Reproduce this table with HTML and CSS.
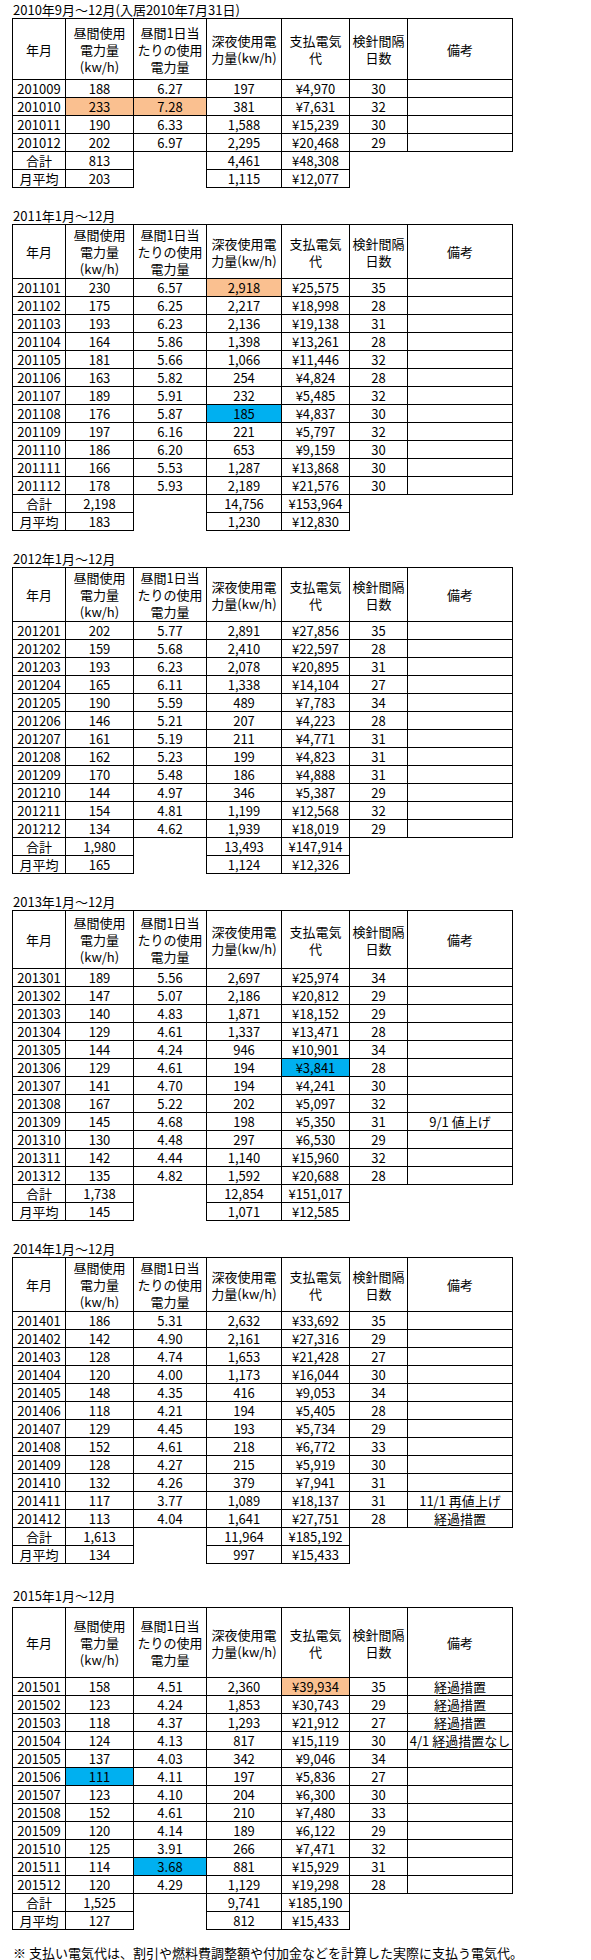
FILE: index.html
```html
<!DOCTYPE html>
<html lang="ja">
<head>
<meta charset="utf-8">
<title>電気使用量</title>
<link rel="stylesheet" href="styles.css">
</head>
<body>
<div class="sheet">

<section class="section">
<div class="title">2010年9月～12月(入居2010年7月31日)</div>
<table class="grid">
<colgroup><col class="c1"><col class="c2"><col class="c3"><col class="c4"><col class="c5"><col class="c6"><col class="c7"></colgroup>
<tr class="head h61"><td>年月</td><td>昼間使用<br>電力量<br>(kw/h)</td><td>昼間1日当<br>たりの使用<br>電力量</td><td>深夜使用電<br>力量(kw/h)</td><td>支払電気<br>代</td><td>検針間隔<br>日数</td><td>備考</td></tr>
<tr><td>201009</td><td>188</td><td>6.27</td><td>197</td><td>¥4,970</td><td>30</td><td></td></tr>
<tr><td>201010</td><td class="hl-orange">233</td><td class="hl-orange">7.28</td><td>381</td><td>¥7,631</td><td>32</td><td></td></tr>
<tr><td>201011</td><td>190</td><td>6.33</td><td>1,588</td><td>¥15,239</td><td>30</td><td></td></tr>
<tr><td>201012</td><td>202</td><td>6.97</td><td>2,295</td><td>¥20,468</td><td>29</td><td></td></tr>
<tr><td>合計</td><td>813</td><td class="blank"></td><td>4,461</td><td>¥48,308</td><td class="blank"></td><td class="blank"></td></tr>
<tr><td>月平均</td><td>203</td><td class="blank"></td><td>1,115</td><td>¥12,077</td><td class="blank"></td><td class="blank"></td></tr>
</table>
</section>

<section class="section">
<div class="title">2011年1月～12月</div>
<table class="grid">
<colgroup><col class="c1"><col class="c2"><col class="c3"><col class="c4"><col class="c5"><col class="c6"><col class="c7"></colgroup>
<tr class="head h54"><td>年月</td><td>昼間使用<br>電力量<br>(kw/h)</td><td>昼間1日当<br>たりの使用<br>電力量</td><td>深夜使用電<br>力量(kw/h)</td><td>支払電気<br>代</td><td>検針間隔<br>日数</td><td>備考</td></tr>
<tr><td>201101</td><td>230</td><td>6.57</td><td class="hl-orange">2,918</td><td>¥25,575</td><td>35</td><td></td></tr>
<tr><td>201102</td><td>175</td><td>6.25</td><td>2,217</td><td>¥18,998</td><td>28</td><td></td></tr>
<tr><td>201103</td><td>193</td><td>6.23</td><td>2,136</td><td>¥19,138</td><td>31</td><td></td></tr>
<tr><td>201104</td><td>164</td><td>5.86</td><td>1,398</td><td>¥13,261</td><td>28</td><td></td></tr>
<tr><td>201105</td><td>181</td><td>5.66</td><td>1,066</td><td>¥11,446</td><td>32</td><td></td></tr>
<tr><td>201106</td><td>163</td><td>5.82</td><td>254</td><td>¥4,824</td><td>28</td><td></td></tr>
<tr><td>201107</td><td>189</td><td>5.91</td><td>232</td><td>¥5,485</td><td>32</td><td></td></tr>
<tr><td>201108</td><td>176</td><td>5.87</td><td class="hl-blue">185</td><td>¥4,837</td><td>30</td><td></td></tr>
<tr><td>201109</td><td>197</td><td>6.16</td><td>221</td><td>¥5,797</td><td>32</td><td></td></tr>
<tr><td>201110</td><td>186</td><td>6.20</td><td>653</td><td>¥9,159</td><td>30</td><td></td></tr>
<tr><td>201111</td><td>166</td><td>5.53</td><td>1,287</td><td>¥13,868</td><td>30</td><td></td></tr>
<tr><td>201112</td><td>178</td><td>5.93</td><td>2,189</td><td>¥21,576</td><td>30</td><td></td></tr>
<tr><td>合計</td><td>2,198</td><td class="blank"></td><td>14,756</td><td>¥153,964</td><td class="blank"></td><td class="blank"></td></tr>
<tr><td>月平均</td><td>183</td><td class="blank"></td><td>1,230</td><td>¥12,830</td><td class="blank"></td><td class="blank"></td></tr>
</table>
</section>

<section class="section">
<div class="title">2012年1月～12月</div>
<table class="grid">
<colgroup><col class="c1"><col class="c2"><col class="c3"><col class="c4"><col class="c5"><col class="c6"><col class="c7"></colgroup>
<tr class="head h54"><td>年月</td><td>昼間使用<br>電力量<br>(kw/h)</td><td>昼間1日当<br>たりの使用<br>電力量</td><td>深夜使用電<br>力量(kw/h)</td><td>支払電気<br>代</td><td>検針間隔<br>日数</td><td>備考</td></tr>
<tr><td>201201</td><td>202</td><td>5.77</td><td>2,891</td><td>¥27,856</td><td>35</td><td></td></tr>
<tr><td>201202</td><td>159</td><td>5.68</td><td>2,410</td><td>¥22,597</td><td>28</td><td></td></tr>
<tr><td>201203</td><td>193</td><td>6.23</td><td>2,078</td><td>¥20,895</td><td>31</td><td></td></tr>
<tr><td>201204</td><td>165</td><td>6.11</td><td>1,338</td><td>¥14,104</td><td>27</td><td></td></tr>
<tr><td>201205</td><td>190</td><td>5.59</td><td>489</td><td>¥7,783</td><td>34</td><td></td></tr>
<tr><td>201206</td><td>146</td><td>5.21</td><td>207</td><td>¥4,223</td><td>28</td><td></td></tr>
<tr><td>201207</td><td>161</td><td>5.19</td><td>211</td><td>¥4,771</td><td>31</td><td></td></tr>
<tr><td>201208</td><td>162</td><td>5.23</td><td>199</td><td>¥4,823</td><td>31</td><td></td></tr>
<tr><td>201209</td><td>170</td><td>5.48</td><td>186</td><td>¥4,888</td><td>31</td><td></td></tr>
<tr><td>201210</td><td>144</td><td>4.97</td><td>346</td><td>¥5,387</td><td>29</td><td></td></tr>
<tr><td>201211</td><td>154</td><td>4.81</td><td>1,199</td><td>¥12,568</td><td>32</td><td></td></tr>
<tr><td>201212</td><td>134</td><td>4.62</td><td>1,939</td><td>¥18,019</td><td>29</td><td></td></tr>
<tr><td>合計</td><td>1,980</td><td class="blank"></td><td>13,493</td><td>¥147,914</td><td class="blank"></td><td class="blank"></td></tr>
<tr><td>月平均</td><td>165</td><td class="blank"></td><td>1,124</td><td>¥12,326</td><td class="blank"></td><td class="blank"></td></tr>
</table>
</section>

<section class="section">
<div class="title">2013年1月～12月</div>
<table class="grid">
<colgroup><col class="c1"><col class="c2"><col class="c3"><col class="c4"><col class="c5"><col class="c6"><col class="c7"></colgroup>
<tr class="head h58"><td>年月</td><td>昼間使用<br>電力量<br>(kw/h)</td><td>昼間1日当<br>たりの使用<br>電力量</td><td>深夜使用電<br>力量(kw/h)</td><td>支払電気<br>代</td><td>検針間隔<br>日数</td><td>備考</td></tr>
<tr><td>201301</td><td>189</td><td>5.56</td><td>2,697</td><td>¥25,974</td><td>34</td><td></td></tr>
<tr><td>201302</td><td>147</td><td>5.07</td><td>2,186</td><td>¥20,812</td><td>29</td><td></td></tr>
<tr><td>201303</td><td>140</td><td>4.83</td><td>1,871</td><td>¥18,152</td><td>29</td><td></td></tr>
<tr><td>201304</td><td>129</td><td>4.61</td><td>1,337</td><td>¥13,471</td><td>28</td><td></td></tr>
<tr><td>201305</td><td>144</td><td>4.24</td><td>946</td><td>¥10,901</td><td>34</td><td></td></tr>
<tr><td>201306</td><td>129</td><td>4.61</td><td>194</td><td class="hl-blue">¥3,841</td><td>28</td><td></td></tr>
<tr><td>201307</td><td>141</td><td>4.70</td><td>194</td><td>¥4,241</td><td>30</td><td></td></tr>
<tr><td>201308</td><td>167</td><td>5.22</td><td>202</td><td>¥5,097</td><td>32</td><td></td></tr>
<tr><td>201309</td><td>145</td><td>4.68</td><td>198</td><td>¥5,350</td><td>31</td><td>9/1 値上げ</td></tr>
<tr><td>201310</td><td>130</td><td>4.48</td><td>297</td><td>¥6,530</td><td>29</td><td></td></tr>
<tr><td>201311</td><td>142</td><td>4.44</td><td>1,140</td><td>¥15,960</td><td>32</td><td></td></tr>
<tr><td>201312</td><td>135</td><td>4.82</td><td>1,592</td><td>¥20,688</td><td>28</td><td></td></tr>
<tr><td>合計</td><td>1,738</td><td class="blank"></td><td>12,854</td><td>¥151,017</td><td class="blank"></td><td class="blank"></td></tr>
<tr><td>月平均</td><td>145</td><td class="blank"></td><td>1,071</td><td>¥12,585</td><td class="blank"></td><td class="blank"></td></tr>
</table>
</section>

<section class="section">
<div class="title">2014年1月～12月</div>
<table class="grid">
<colgroup><col class="c1"><col class="c2"><col class="c3"><col class="c4"><col class="c5"><col class="c6"><col class="c7"></colgroup>
<tr class="head h54"><td>年月</td><td>昼間使用<br>電力量<br>(kw/h)</td><td>昼間1日当<br>たりの使用<br>電力量</td><td>深夜使用電<br>力量(kw/h)</td><td>支払電気<br>代</td><td>検針間隔<br>日数</td><td>備考</td></tr>
<tr><td>201401</td><td>186</td><td>5.31</td><td>2,632</td><td>¥33,692</td><td>35</td><td></td></tr>
<tr><td>201402</td><td>142</td><td>4.90</td><td>2,161</td><td>¥27,316</td><td>29</td><td></td></tr>
<tr><td>201403</td><td>128</td><td>4.74</td><td>1,653</td><td>¥21,428</td><td>27</td><td></td></tr>
<tr><td>201404</td><td>120</td><td>4.00</td><td>1,173</td><td>¥16,044</td><td>30</td><td></td></tr>
<tr><td>201405</td><td>148</td><td>4.35</td><td>416</td><td>¥9,053</td><td>34</td><td></td></tr>
<tr><td>201406</td><td>118</td><td>4.21</td><td>194</td><td>¥5,405</td><td>28</td><td></td></tr>
<tr><td>201407</td><td>129</td><td>4.45</td><td>193</td><td>¥5,734</td><td>29</td><td></td></tr>
<tr><td>201408</td><td>152</td><td>4.61</td><td>218</td><td>¥6,772</td><td>33</td><td></td></tr>
<tr><td>201409</td><td>128</td><td>4.27</td><td>215</td><td>¥5,919</td><td>30</td><td></td></tr>
<tr><td>201410</td><td>132</td><td>4.26</td><td>379</td><td>¥7,941</td><td>31</td><td></td></tr>
<tr><td>201411</td><td>117</td><td>3.77</td><td>1,089</td><td>¥18,137</td><td>31</td><td>11/1 再値上げ</td></tr>
<tr><td>201412</td><td>113</td><td>4.04</td><td>1,641</td><td>¥27,751</td><td>28</td><td>経過措置</td></tr>
<tr><td>合計</td><td>1,613</td><td class="blank"></td><td>11,964</td><td>¥185,192</td><td class="blank"></td><td class="blank"></td></tr>
<tr><td>月平均</td><td>134</td><td class="blank"></td><td>997</td><td>¥15,433</td><td class="blank"></td><td class="blank"></td></tr>
</table>
</section>

<section class="section last">
<div class="title">2015年1月～12月</div>
<table class="grid">
<colgroup><col class="c1"><col class="c2"><col class="c3"><col class="c4"><col class="c5"><col class="c6"><col class="c7"></colgroup>
<tr class="head h70"><td>年月</td><td>昼間使用<br>電力量<br>(kw/h)</td><td>昼間1日当<br>たりの使用<br>電力量</td><td>深夜使用電<br>力量(kw/h)</td><td>支払電気<br>代</td><td>検針間隔<br>日数</td><td>備考</td></tr>
<tr><td>201501</td><td>158</td><td>4.51</td><td>2,360</td><td class="hl-orange">¥39,934</td><td>35</td><td>経過措置</td></tr>
<tr><td>201502</td><td>123</td><td>4.24</td><td>1,853</td><td>¥30,743</td><td>29</td><td>経過措置</td></tr>
<tr><td>201503</td><td>118</td><td>4.37</td><td>1,293</td><td>¥21,912</td><td>27</td><td>経過措置</td></tr>
<tr><td>201504</td><td>124</td><td>4.13</td><td>817</td><td>¥15,119</td><td>30</td><td>4/1 経過措置なし</td></tr>
<tr><td>201505</td><td>137</td><td>4.03</td><td>342</td><td>¥9,046</td><td>34</td><td></td></tr>
<tr><td>201506</td><td class="hl-blue">111</td><td>4.11</td><td>197</td><td>¥5,836</td><td>27</td><td></td></tr>
<tr><td>201507</td><td>123</td><td>4.10</td><td>204</td><td>¥6,300</td><td>30</td><td></td></tr>
<tr><td>201508</td><td>152</td><td>4.61</td><td>210</td><td>¥7,480</td><td>33</td><td></td></tr>
<tr><td>201509</td><td>120</td><td>4.14</td><td>189</td><td>¥6,122</td><td>29</td><td></td></tr>
<tr><td>201510</td><td>125</td><td>3.91</td><td>266</td><td>¥7,471</td><td>32</td><td></td></tr>
<tr><td>201511</td><td>114</td><td class="hl-blue">3.68</td><td>881</td><td>¥15,929</td><td>31</td><td></td></tr>
<tr><td>201512</td><td>120</td><td>4.29</td><td>1,129</td><td>¥19,298</td><td>28</td><td></td></tr>
<tr><td>合計</td><td>1,525</td><td class="blank"></td><td>9,741</td><td>¥185,190</td><td class="blank"></td><td class="blank"></td></tr>
<tr><td>月平均</td><td>127</td><td class="blank"></td><td>812</td><td>¥15,433</td><td class="blank"></td><td class="blank"></td></tr>
</table>
</section>

<p class="note">※ 支払い電気代は、割引や燃料費調整額や付加金などを計算した実際に支払う電気代。</p>

</div>
</body>
</html>
```

FILE: styles.css
```css
* {
  box-sizing: border-box;
}

html,
body {
  margin: 0;
  padding: 0;
  background: #ffffff;
}

body {
  font-family: "Noto Sans CJK JP", "Noto Sans CJK SC", sans-serif;
  font-size: 13px;
  color: #000000;
}

.sheet {
  padding: 1px 0 0 12px;
}

.section + .section {
  margin-top: 19px;
}

.section.last {
  margin-top: 23px;
}

.title {
  height: 17px;
  line-height: 17px;
  padding-left: 1px;
  white-space: nowrap;
}

.section.last .title {
  height: 20px;
}

.grid {
  border-collapse: collapse;
  table-layout: fixed;
  width: 500px;
}

.c1 { width: 53px; }
.c2 { width: 68px; }
.c3 { width: 73px; }
.c4 { width: 75px; }
.c5 { width: 68px; }
.c6 { width: 58px; }
.c7 { width: 105px; }

.grid td {
  box-sizing: content-box;
  border: 1px solid #000000;
  padding: 0;
  height: 17px;
  line-height: 17px;
  text-align: center;
  vertical-align: middle;
  white-space: nowrap;
  overflow: hidden;
}

.grid td.blank {
  border: none;
}

.head.h54 td { height: 53px; }
.head.h58 td { height: 57px; }
.head.h61 td { height: 60px; }
.head.h70 td { height: 69px; }

.hl-orange {
  background: #fac090;
}

.hl-blue {
  background: #00b0f0;
}

.note {
  margin: 14px 0 0 1px;
  line-height: 17px;
  white-space: nowrap;
}
```
